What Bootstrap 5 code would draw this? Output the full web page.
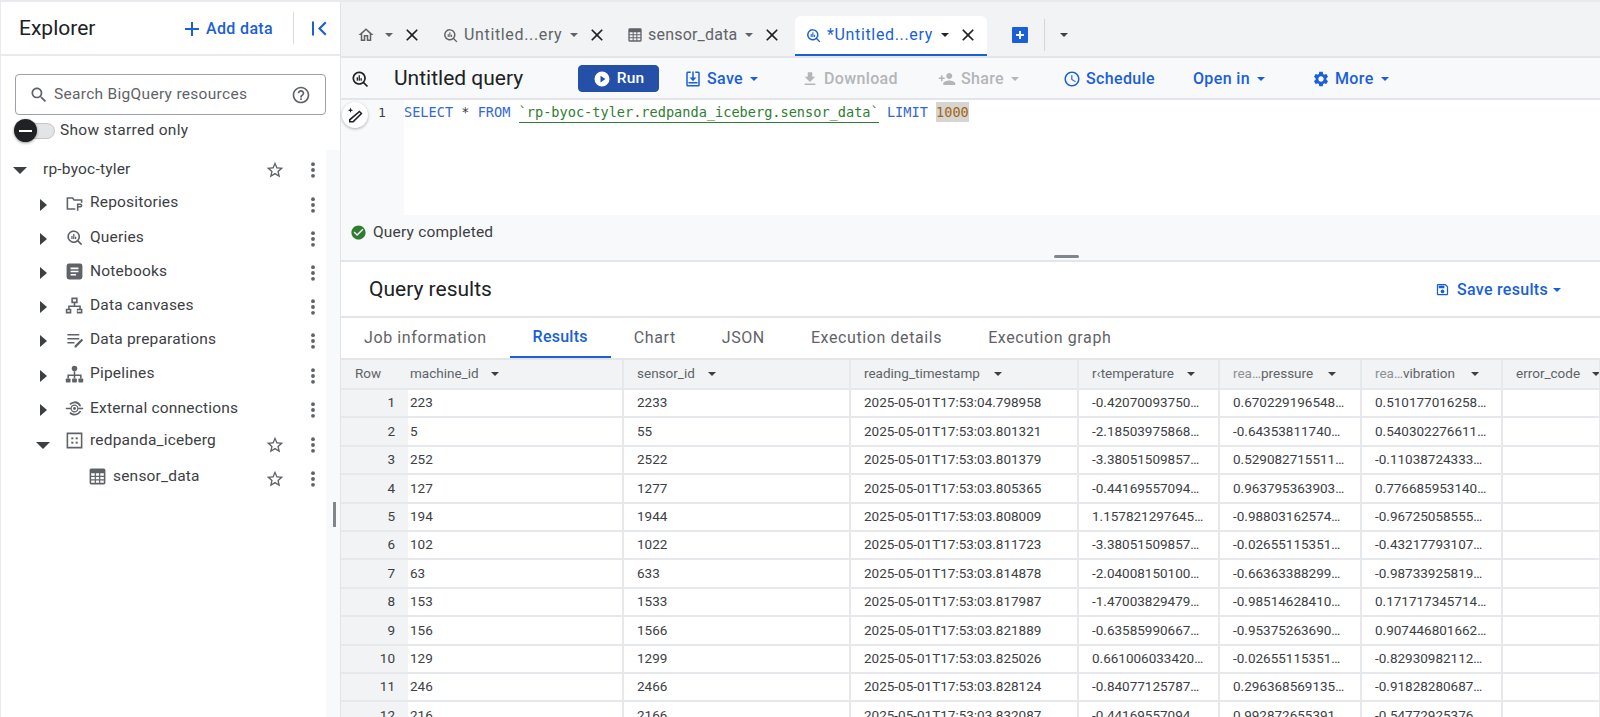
<!DOCTYPE html>
<html lang="en"><head><meta charset="utf-8"><title>BigQuery</title>
<link href="https://cdn.jsdelivr.net/npm/bootstrap@5.3.0/dist/css/bootstrap.min.css" rel="stylesheet">
<style>
html,body{height:717px;overflow:hidden}
body{font-family:Roboto,"Liberation Sans",sans-serif;font-size:15.5px;letter-spacing:.2px;color:#3c4043;background:#fff;border-top:2px solid #e8eaed;border-left:1px solid #e8eaed}
svg{display:block;flex:none;fill:currentColor}
.shell{height:715px}
.side{width:339px;flex:none;position:relative}
.side-head{height:54px;padding-left:18px;border-bottom:2px solid #e8eaed}
.side-title{font-size:21px;letter-spacing:0;color:#202124;width:165px;padding-top:1px}
.blue{color:#1a5fd8}
.add{font-weight:500;font-size:16px;letter-spacing:.35px;gap:6px;width:109px;padding-top:1px}
.vr-line{width:1px;height:32px;background:#dadce0;margin-right:17px}
.searchbox{margin:18px 14px 0;height:41px;border:1px solid #9aa0a6;border-radius:4px;padding:0 14px 0 13px;color:#5f6368}
.searchbox span{margin-left:5px;flex:1;letter-spacing:.3px}
.toggle-line{height:26px;margin:3px 0 0 6px;color:#3c4043;letter-spacing:.3px}
.track{width:38px;height:16px;border-radius:8px;background:#e3e4e6;border:1px solid #c4c7ca;position:relative;margin-left:10px;margin-right:5px}
.thumb{position:absolute;left:-4px;top:-5px;width:23px;height:23px;border-radius:50%;background:#202124;box-shadow:0 1px 3px rgba(0,0,0,.4);display:flex;align-items:center;justify-content:center}
.thumb i{display:block;width:13px;height:2px;background:#fff}
.tree{margin-top:10px;width:325px}
.node{height:34.2px}
.node.first{height:32px}
.car-r{width:0;height:0;border-left:7px solid #3c4043;border-top:6px solid transparent;border-bottom:6px solid transparent;margin-left:39px;margin-right:18px;margin-top:3px}
.car-d{width:0;height:0;border-top:7px solid #3c4043;border-left:7px solid transparent;border-right:7px solid transparent;margin-left:12px;margin-right:16px}
.car-d.deep{margin-left:35px;margin-right:15px;margin-top:6px}
.ic{color:#5f6368;margin-right:6px}
.grow{flex:1}
.star{color:#5f6368;margin-right:18px}
.kebab{color:#5f6368;margin-right:3px;margin-top:3px}
.first .kebab{margin-top:0}
.deep-leaf{padding-left:87px}
.lower .star,.lower .kebab{margin-top:5px}
.raised{margin-top:-4px}
.rail{position:absolute;right:0;top:148px;bottom:0;width:14px;background:#f8f9fb}
.grip{position:absolute;right:4px;top:500px;width:3px;height:25px;background:#80868b}
.workspace{min-width:0;border-left:1px solid #e0e3e7}
.tabstrip{height:56px;background:#f1f3f4;align-items:flex-end;border-bottom:2px solid #e3e5e8;color:#5f6368;font-size:16px}
.tabit{height:40px;padding-bottom:2px;white-space:nowrap}
.tabit.on{background:#fff;color:#1a5fd8;border-bottom:2px solid #1a5fd8;border-radius:6px 6px 0 0;padding-bottom:0}
.t-home{padding-left:16px;width:90px}
.t-q{width:186px;padding-left:11px}
.t-s{width:178px;padding-left:10px}
.t-a{width:192px;padding-left:10px}
.tabit .lbl{margin:0 8px 0 5px}
.lbl.dots{letter-spacing:.65px}
.caret-sm{width:0;height:0;border-top:4px solid currentColor;border-left:4px solid transparent;border-right:4px solid transparent}
.x{color:#202124;margin-left:9px}
.t-home .caret-sm{margin-left:10px}
.t-add{margin-left:16px;width:41px;padding-left:9px}
.t-div{width:1px;height:32px;background:#d5d7da;margin-bottom:5px}
.t-more{margin-left:15px;color:#3c4043}
.tbar{height:42px;background:#f8f9fa;border-bottom:2px solid #e3e5e8;font-weight:500;font-size:16px;padding-top:1px}
.tbar-title{font-size:21px;font-weight:400;letter-spacing:0;color:#202124;width:184px;margin-left:24px}
.qmark{margin-left:9px;color:#202124}
.run.btn{--bs-btn-bg:#2450a8;--bs-btn-color:#fff;--bs-btn-border-color:#2450a8;--bs-btn-padding-y:0;--bs-btn-padding-x:0;--bs-btn-font-size:15.5px;--bs-btn-font-weight:500;--bs-btn-border-radius:4px;width:81px;height:27px;gap:6px;letter-spacing:.2px}
.tool{gap:5px;white-space:nowrap;letter-spacing:.35px}
.tool .caret-sm{margin-left:2px}
.off{color:#b3b5b8}
.tl-save{margin-left:25px;width:117px}
.tl-dl{width:137px}
.tl-sh{width:125px}
.tl-sc{width:130px}
.tl-op{width:119px}
.editor{height:115px;background:#fff}
.gutter{width:63px;background:#f8f9fa;position:relative;flex:none}
.gutter b{font-family:"DejaVu Sans Mono",monospace;font-weight:400;font-size:13px;position:absolute;left:37px;top:3px;color:#3c4043}
.pen{position:absolute;left:1px;top:2px;width:26px;height:26px;border-radius:50%;background:#fff;box-shadow:0 1px 3px rgba(0,0,0,.3);display:flex;align-items:center;justify-content:center;color:#202124}
.sql{font-family:"DejaVu Sans Mono",monospace;font-size:13.6px;letter-spacing:0;line-height:20px;padding-top:2px;margin:0;color:#3c4043;white-space:pre;overflow:visible}
.kw{color:#3367d6}
.str{color:#2e7d32;border-bottom:1px solid #2e7d32;padding-bottom:2px}
.num{color:#a5660f;background:#d5d5d3;padding:2px 0}
.status{height:47px;background:#f8f9fa;border-bottom:2px solid #e3e5e8;position:relative;padding-left:9px;padding-bottom:10px;color:#3c4043}
.status svg{color:#2e7d32;margin-right:6px}
.handle{position:absolute;left:713px;bottom:2px;width:25px;height:3px;border-radius:2px;background:#80868b}
.reshead{height:56px;padding:1px 39px 0 28px;border-bottom:2px solid #e3e5e8}
.reshead h2{font-size:21px;font-weight:400;letter-spacing:0;color:#202124;margin:0}
.saver{gap:7px;font-weight:500;font-size:16px;letter-spacing:.3px}
.saver .caret-sm{margin-left:-2px}
.subtabs{height:42px;color:#5f6368;border-bottom:2px solid #e3e5e8;font-size:16px;letter-spacing:.6px}
.subtabs a{display:flex;align-items:center;height:40px;padding:0 23px;color:inherit;text-decoration:none;white-space:nowrap}
.subtabs a.on{color:#1a5fd8;font-weight:500;letter-spacing:.25px;border-bottom:2px solid #1a5fd8}
.grid-wrap{overflow:hidden;flex:1;min-height:0}
.tbl.table{table-layout:fixed;width:1259px;margin:0;font-size:13.5px;letter-spacing:0;--bs-table-color:#3c4043;--bs-table-border-color:#e6e8ec}
.tbl col:nth-child(1){width:67px}.tbl col:nth-child(2){width:215px}.tbl col:nth-child(3){width:227px}.tbl col:nth-child(4){width:228px}
.tbl col:nth-child(5){width:141px}.tbl col:nth-child(6){width:142px}.tbl col:nth-child(7){width:141px}.tbl col:nth-child(8){width:98px}
.tbl th,.tbl td{height:28.4px;padding:0 0 0 13px;vertical-align:middle;border-width:0 2px 2px 0;border-style:solid;white-space:nowrap;overflow:hidden;background:#fff;line-height:1}
.tbl th{height:29px;background:#f1f3f4;color:#5f6368;font-weight:400}
.tbl th.rn{padding-left:14px;border-right:0;border-bottom-color:#e6e8ec}
.tbl td.rn{background:#f1f3f4;color:#3c4043;text-align:right;padding:0 13px 0 0;border-right:0;border-bottom-color:#e6e8ec}
.tbl .tight{padding-left:2px}
.hcell{display:flex;align-items:center;justify-content:space-between}
.hcell .caret-sm{border-top-color:#3c4043;margin-right:0}
.w1{width:89px}.w2{width:79px}.w3{width:138px}.w4{width:103px}.w5{width:103px}.w6{width:104px}.w7{width:84px}
.hint{color:#8d9196}
</style></head><body>
<svg width="0" height="0" class="position-absolute"><defs>
<symbol id="i-q" viewBox="0 0 24 24"><path d="M11 3a8 8 0 1 0 4.900 14.300l4.400 4.400 1.400-1.400-4.400-4.400A8 8 0 0 0 11 3zm0 2a6 6 0 1 1 0 12 6 6 0 0 1 0-12z"/><rect x="8" y="10" width="1.600" height="4"/><rect x="10.300" y="7.500" width="1.600" height="6.500"/><rect x="12.600" y="11" width="1.600" height="3"/></symbol>
<symbol id="i-x" viewBox="0 0 24 24"><path d="M19 6.410L17.590 5 12 10.590 6.410 5 5 6.410 10.590 12 5 17.590 6.410 19 12 13.410 17.590 19 19 17.590 13.410 12z"/></symbol>
<symbol id="i-star" viewBox="0 0 24 24"><path d="M22 9.240l-7.190-.62L12 2 9.190 8.630 2 9.240l5.460 4.730L5.820 21 12 17.270 18.180 21l-1.630-7.030L22 9.240zM12 15.400l-3.760 2.270 1-4.280-3.320-2.880 4.380-.38L12 6.100l1.710 4.040 4.380.38-3.320 2.880 1 4.280L12 15.400z"/></symbol>
<symbol id="i-more" viewBox="0 0 24 24"><circle cx="12" cy="5" r="2.300"/><circle cx="12" cy="12" r="2.300"/><circle cx="12" cy="19" r="2.300"/></symbol>
<symbol id="i-table" viewBox="0 0 24 24"><path fill-rule="evenodd" d="M4 2h16a2 2 0 0 1 2 2v16a2 2 0 0 1-2 2H4a2 2 0 0 1-2-2V4a2 2 0 0 1 2-2zm0 6v3h4.500V8zm6 0v3h4V8zm5.500 0v3H20V8zM4 12.500v3h4.500v-3zm6 0v3h4v-3zm5.500 0v3H20v-3zM4 17v3h4.500v-3zm6 0v3h4v-3zm5.500 0v3H20v-3z"/></symbol>
</defs></svg>
<div class="d-flex shell">
<aside class="side">
  <div class="side-head d-flex align-items-center">
    <div class="side-title">Explorer</div>
    <div class="add blue d-flex align-items-center"><svg width="16" height="16" viewBox="0 0 16 16"><path d="M7 1h2v6h6v2H9v6H7V9H1V7h6z"/></svg>Add data</div>
    <div class="vr-line"></div>
    <svg class="blue" width="17" height="17" viewBox="0 0 17 17"><rect x="1" y="1.500" width="2" height="14"/><path d="M14 1.500l1.500 1.500-5.500 5.500 5.500 5.500L14 15.500l-7-7z"/></svg>
  </div>
  <div class="searchbox d-flex align-items-center">
    <svg width="20" height="20" viewBox="0 0 24 24"><path d="M15.500 14h-.79l-.28-.27C15.410 12.590 16 11.110 16 9.500 16 5.910 13.090 3 9.500 3S3 5.910 3 9.500 5.910 16 9.500 16c1.610 0 3.090-.59 4.230-1.570l.27.28v.79l5 4.990L20.490 19l-4.990-5zm-6 0C7.010 14 5 11.990 5 9.500S7.010 5 9.500 5 14 7.010 14 9.500 11.990 14 9.500 14z"/></svg>
    <span class="hint-text">Search BigQuery resources</span>
    <svg width="20" height="20" viewBox="0 0 24 24"><path d="M11 18h2v-2h-2v2zm1-16C6.480 2 2 6.480 2 12s4.480 10 10 10 10-4.480 10-10S17.520 2 12 2zm0 18c-4.410 0-8-3.590-8-8s3.590-8 8-8 8 3.590 8 8-3.590 8-8 8zm0-14c-2.210 0-4 1.790-4 4h2c0-1.100.9-2 2-2s2 .9 2 2c0 2-3 1.750-3 5h2c0-2.250 3-2.500 3-5 0-2.210-1.790-4-4-4z"/></svg>
  </div>
  <div class="toggle-line d-flex align-items-center"><div class="track"><div class="thumb"><i></i></div></div>Show starred only</div>
  <div class="tree">
    <div class="node first d-flex align-items-center"><div class="car-d"></div><span class="grow">rp-byoc-tyler</span><svg class="star" width="20" height="20"><use href="#i-star"/></svg><svg class="kebab" width="20" height="20"><use href="#i-more"/></svg></div>
    <div class="node d-flex align-items-center"><div class="car-r"></div><svg class="ic" width="19" height="19" viewBox="0 0 24 24"><path d="M2 4h8l2 2.500h10V11h-2V8.500H11L9 6H4v12h9v2H2zM15 12h4.500a2.500 2.500 0 0 1 0 5H17v4h-2zm2 2v1h2.500a.5.500 0 0 0 0-1z"/></svg><span class="grow">Repositories</span><svg class="kebab" width="20" height="20"><use href="#i-more"/></svg></div>
    <div class="node d-flex align-items-center"><div class="car-r"></div><svg class="ic" width="19" height="19"><use href="#i-q"/></svg><span class="grow">Queries</span><svg class="kebab" width="20" height="20"><use href="#i-more"/></svg></div>
    <div class="node d-flex align-items-center"><div class="car-r"></div><svg class="ic" width="19" height="19" viewBox="0 0 24 24"><path fill-rule="evenodd" d="M5 2h14a3 3 0 0 1 3 3v14a3 3 0 0 1-3 3H5a3 3 0 0 1-3-3V5a3 3 0 0 1 3-3zm2 5v2h10V7zm0 4v2h10v-2zm0 4v2h7v-2z"/></svg><span class="grow">Notebooks</span><svg class="kebab" width="20" height="20"><use href="#i-more"/></svg></div>
    <div class="node d-flex align-items-center"><div class="car-r"></div><svg class="ic" width="19" height="19" viewBox="0 0 24 24"><path fill-rule="evenodd" d="M8 2h8v7h-3v3h7v4h2v6h-7v-6h3v-2H6v2h2v6H1v-6h3v-4h7V9H8zm2 2v3h4V4zM3 18v2h3v-2zm13 0v2h4v-2z"/></svg><span class="grow">Data canvases</span><svg class="kebab" width="20" height="20"><use href="#i-more"/></svg></div>
    <div class="node d-flex align-items-center"><div class="car-r"></div><svg class="ic" width="19" height="19" viewBox="0 0 24 24"><path d="M3 5h15v2H3zM3 10h15v2H3zM3 15h9v2H3zM21 11l2 2-9 9h-2v-2z"/></svg><span class="grow">Data preparations</span><svg class="kebab" width="20" height="20"><use href="#i-more"/></svg></div>
    <div class="node d-flex align-items-center"><div class="car-r"></div><svg class="ic" width="19" height="19" viewBox="0 0 24 24"><circle cx="12" cy="4.500" r="3.500"/><path d="M11 8h2v4h8v5h-2v-3h-6v3h-2v-3H5v3H3v-5h8z"/><rect x="1" y="17" width="6" height="5" rx="1"/><rect x="9" y="17" width="6" height="5" rx="1"/><rect x="17" y="17" width="6" height="5" rx="1"/></svg><span class="grow">Pipelines</span><svg class="kebab" width="20" height="20"><use href="#i-more"/></svg></div>
    <div class="node d-flex align-items-center"><div class="car-r"></div><svg class="ic" width="19" height="19" viewBox="0 0 24 24"><path d="M1 11h6.100a5 5 0 1 1 0 2H1zm11-2.500a3.500 3.500 0 1 0 0 7 3.500 3.500 0 0 0 0-7zM17 11h6v2h-6zM12 3a9 9 0 0 1 8.500 6h-2.200A7 7 0 0 0 7 7.500L5.500 6A9 9 0 0 1 12 3zM7 16.500A7 7 0 0 0 18.300 15h2.200a9 9 0 0 1-15 3z"/><circle cx="12" cy="12" r="1.800"/></svg><span class="grow">External connections</span><svg class="kebab" width="20" height="20"><use href="#i-more"/></svg></div>
    <div class="node d-flex align-items-center lower"><div class="car-d deep"></div><svg class="ic raised" width="19" height="19" viewBox="0 0 24 24"><path fill-rule="evenodd" d="M2 2h20v20H2zm2 2v16h16V4z"/><rect x="8" y="8" width="2.500" height="2.500"/><rect x="13.500" y="8" width="2.500" height="2.500"/><rect x="8" y="13.500" width="2.500" height="2.500"/><rect x="13.500" y="13.500" width="2.500" height="2.500"/></svg><span class="grow raised">redpanda_iceberg</span><svg class="star" width="20" height="20"><use href="#i-star"/></svg><svg class="kebab" width="20" height="20"><use href="#i-more"/></svg></div>
    <div class="node d-flex align-items-center deep-leaf lower"><svg class="ic" width="19" height="19"><use href="#i-table"/></svg><span class="grow">sensor_data</span><svg class="star" width="20" height="20"><use href="#i-star"/></svg><svg class="kebab" width="20" height="20"><use href="#i-more"/></svg></div>
  </div>
  <div class="rail"></div><div class="grip"></div>
</aside>
<main class="workspace flex-grow-1 d-flex flex-column">
  <div class="tabstrip d-flex">
    <div class="tabit t-home d-flex align-items-center"><svg width="18" height="18" viewBox="0 0 24 24"><path d="M12 5.690l5 4.500V18h-2v-6H9v6H7v-7.810l5-4.500M12 3L2 12h3v8h6v-6h2v6h6v-8h3L12 3z"/></svg><div class="caret-sm"></div><svg class="x" width="20" height="20"><use href="#i-x"/></svg></div>
    <div class="tabit t-q d-flex align-items-center"><svg width="17" height="17"><use href="#i-q"/></svg><span class="lbl dots">Untitled...ery</span><div class="caret-sm"></div><svg class="x" width="20" height="20"><use href="#i-x"/></svg></div>
    <div class="tabit t-s d-flex align-items-center"><svg width="16" height="16"><use href="#i-table"/></svg><span class="lbl">sensor_data</span><div class="caret-sm"></div><svg class="x" width="20" height="20"><use href="#i-x"/></svg></div>
    <div class="tabit on t-a d-flex align-items-center"><svg width="17" height="17"><use href="#i-q"/></svg><span class="lbl dots">*Untitled...ery</span><div class="caret-sm text-dark"></div><svg class="x" width="20" height="20"><use href="#i-x"/></svg></div>
    <div class="tabit t-add d-flex align-items-center"><svg class="blue" width="16" height="16" viewBox="0 0 16 16"><path fill-rule="evenodd" d="M1 0h14a1 1 0 0 1 1 1v14a1 1 0 0 1-1 1H1a1 1 0 0 1-1-1V1a1 1 0 0 1 1-1zm6 4v3H4v2h3v3h2V9h3V7H9V4z"/></svg></div>
    <div class="t-div"></div>
    <div class="tabit t-more d-flex align-items-center"><div class="caret-sm"></div></div>
  </div>
  <div class="tbar d-flex align-items-center">
    <svg class="qmark" width="20" height="20"><use href="#i-q"/></svg>
    <div class="tbar-title">Untitled query</div>
    <button class="btn run d-flex align-items-center justify-content-center" type="button"><svg width="18" height="18" viewBox="0 0 24 24"><path fill-rule="evenodd" d="M12 2a10 10 0 1 1 0 20 10 10 0 0 1 0-20zM10 7.500v9l6.500-4.500z"/></svg>Run</button>
    <div class="tool tl-save blue d-flex align-items-center"><svg width="18" height="18" viewBox="0 0 24 24"><path fill-rule="evenodd" d="M5 2h4v2H5v16h14V4h-4V2h4a2 2 0 0 1 2 2v16a2 2 0 0 1-2 2H5a2 2 0 0 1-2-2V4a2 2 0 0 1 2-2z"/><path d="M11 2h2v8h3.500L12 15l-4.500-5H11zM6 16h12v2H6z"/></svg>Save<div class="caret-sm"></div></div>
    <div class="tool tl-dl off d-flex align-items-center"><svg width="18" height="18" viewBox="0 0 24 24"><path d="M19 9h-4V3H9v6H5l7 7 7-7zM5 18v2h14v-2H5z"/></svg>Download</div>
    <div class="tool tl-sh off d-flex align-items-center"><svg width="18" height="18" viewBox="0 0 24 24"><path d="M15 12c2.210 0 4-1.790 4-4s-1.790-4-4-4-4 1.790-4 4 1.790 4 4 4zm-9-2V7H4v3H1v2h3v3h2v-3h3v-2H6zm9 4c-2.670 0-8 1.340-8 4v2h16v-2c0-2.660-5.330-4-8-4z"/></svg>Share<div class="caret-sm"></div></div>
    <div class="tool tl-sc blue d-flex align-items-center"><svg width="18" height="18" viewBox="0 0 24 24"><path d="M11.990 2C6.470 2 2 6.480 2 12s4.470 10 9.990 10C17.520 22 22 17.520 22 12S17.520 2 11.990 2zM12 20c-4.420 0-8-3.580-8-8s3.580-8 8-8 8 3.580 8 8-3.580 8-8 8zm.5-13H11v6l5.250 3.150.75-1.230-4.500-2.670z"/></svg>Schedule</div>
    <div class="tool tl-op blue d-flex align-items-center">Open in<div class="caret-sm"></div></div>
    <div class="tool blue d-flex align-items-center"><svg width="18" height="18" viewBox="0 0 24 24"><path d="M19.140 12.940c.04-.3.06-.61.06-.94 0-.32-.02-.64-.07-.94l2.030-1.580c.18-.14.23-.41.12-.61l-1.920-3.320c-.12-.22-.37-.29-.59-.22l-2.390.96c-.5-.38-1.030-.7-1.620-.94l-.36-2.540c-.04-.24-.24-.41-.48-.41h-3.840c-.24 0-.43.17-.47.41l-.36 2.540c-.59.24-1.130.57-1.620.94l-2.390-.96c-.22-.08-.47 0-.59.22L2.740 8.870c-.12.21-.08.47.12.61l2.030 1.580c-.05.3-.09.63-.09.94s.02.64.07.94l-2.030 1.580c-.18.14-.23.41-.12.61l1.920 3.320c.12.22.37.29.59.22l2.390-.96c.5.38 1.030.7 1.620.94l.36 2.540c.05.24.24.41.48.41h3.840c.24 0 .44-.17.47-.41l.36-2.540c.59-.24 1.130-.56 1.620-.94l2.390.96c.22.08.47 0 .59-.22l1.920-3.320c.12-.22.07-.47-.12-.61l-2.010-1.580zM12 15.600c-1.980 0-3.600-1.620-3.600-3.600s1.620-3.600 3.600-3.600 3.600 1.620 3.600 3.600-1.620 3.600-3.600 3.600z"/></svg>More<div class="caret-sm"></div></div>
  </div>
  <div class="editor d-flex">
    <div class="gutter"><div class="pen"><svg width="18" height="18" viewBox="0 0 24 24"><path fill-rule="evenodd" d="M18 6l4 4L10 22H4v-4.500zm0 2.800L6 19v1h3L19.200 10zM6 2l1 2.500L9.500 5.500 7 6.500 6 9 5 6.500 2.500 5.500 5 4.500z"/></svg></div><b>1</b></div>
    <pre class="sql"><span class="kw">SELECT</span> * <span class="kw">FROM</span> <span class="str">`rp-byoc-tyler.redpanda_iceberg.sensor_data`</span> <span class="kw">LIMIT</span> <span class="num">1000</span></pre>
  </div>
  <div class="status d-flex align-items-center"><svg width="17" height="17" viewBox="0 0 24 24"><path d="M12 2C6.480 2 2 6.480 2 12s4.480 10 10 10 10-4.480 10-10S17.520 2 12 2zm-2 15l-5-5 1.410-1.410L10 14.170l7.590-7.590L19 8l-9 9z"/></svg>Query completed<div class="handle"></div></div>
  <div class="reshead d-flex align-items-center justify-content-between"><h2>Query results</h2>
    <div class="saver blue d-flex align-items-center"><svg width="15" height="15" viewBox="0 0 24 24"><path d="M17 3H5c-1.110 0-2 .9-2 2v14c0 1.100.89 2 2 2h14c1.100 0 2-.9 2-2V7l-4-4zm2 16H5V5h11.170L19 7.830V19zm-7-7c-1.660 0-3 1.340-3 3s1.340 3 3 3 3-1.340 3-3-1.340-3-3-3zM6 6h9v4H6z"/></svg>Save results<div class="caret-sm"></div></div>
  </div>
  <div class="subtabs d-flex"><a href="#">Job information</a><a href="#" class="on">Results</a><a href="#">Chart</a><a href="#">JSON</a><a href="#">Execution details</a><a href="#">Execution graph</a></div>
  <div class="grid-wrap">
  <table class="table tbl"><colgroup><col><col><col><col><col><col><col><col></colgroup>
  <thead><tr>
    <th class="rn">Row</th>
    <th class="tight"><div class="hcell w1">machine_id<div class="caret-sm"></div></div></th>
    <th><div class="hcell w2">sensor_id<div class="caret-sm"></div></div></th>
    <th><div class="hcell w3">reading_timestamp<div class="caret-sm"></div></div></th>
    <th><div class="hcell w4">r‹temperature<div class="caret-sm"></div></div></th>
    <th><div class="hcell w5"><span><span class="hint">rea…</span>pressure</span><div class="caret-sm"></div></div></th>
    <th><div class="hcell w6"><span><span class="hint">rea…</span>vibration</span><div class="caret-sm"></div></div></th>
    <th><div class="hcell w7">error_code<div class="caret-sm"></div></div></th>
  </tr></thead>
  <tbody>
  <tr><td class="rn">1</td><td class="tight">223</td><td>2233</td><td>2025-05-01T17:53:04.798958</td><td>-0.42070093750…</td><td>0.670229196548…</td><td>0.510177016258…</td><td></td></tr>
  <tr><td class="rn">2</td><td class="tight">5</td><td>55</td><td>2025-05-01T17:53:03.801321</td><td>-2.18503975868…</td><td>-0.64353811740…</td><td>0.540302276611…</td><td></td></tr>
  <tr><td class="rn">3</td><td class="tight">252</td><td>2522</td><td>2025-05-01T17:53:03.801379</td><td>-3.38051509857…</td><td>0.529082715511…</td><td>-0.11038724333…</td><td></td></tr>
  <tr><td class="rn">4</td><td class="tight">127</td><td>1277</td><td>2025-05-01T17:53:03.805365</td><td>-0.44169557094…</td><td>0.963795363903…</td><td>0.776685953140…</td><td></td></tr>
  <tr><td class="rn">5</td><td class="tight">194</td><td>1944</td><td>2025-05-01T17:53:03.808009</td><td>1.157821297645…</td><td>-0.98803162574…</td><td>-0.96725058555…</td><td></td></tr>
  <tr><td class="rn">6</td><td class="tight">102</td><td>1022</td><td>2025-05-01T17:53:03.811723</td><td>-3.38051509857…</td><td>-0.02655115351…</td><td>-0.43217793107…</td><td></td></tr>
  <tr><td class="rn">7</td><td class="tight">63</td><td>633</td><td>2025-05-01T17:53:03.814878</td><td>-2.04008150100…</td><td>-0.66363388299…</td><td>-0.98733925819…</td><td></td></tr>
  <tr><td class="rn">8</td><td class="tight">153</td><td>1533</td><td>2025-05-01T17:53:03.817987</td><td>-1.47003829479…</td><td>-0.98514628410…</td><td>0.171717345714…</td><td></td></tr>
  <tr><td class="rn">9</td><td class="tight">156</td><td>1566</td><td>2025-05-01T17:53:03.821889</td><td>-0.63585990667…</td><td>-0.95375263690…</td><td>0.907446801662…</td><td></td></tr>
  <tr><td class="rn">10</td><td class="tight">129</td><td>1299</td><td>2025-05-01T17:53:03.825026</td><td>0.661006033420…</td><td>-0.02655115351…</td><td>-0.82930982112…</td><td></td></tr>
  <tr><td class="rn">11</td><td class="tight">246</td><td>2466</td><td>2025-05-01T17:53:03.828124</td><td>-0.84077125787…</td><td>0.296368569135…</td><td>-0.91828280687…</td><td></td></tr>
  <tr><td class="rn">12</td><td class="tight">216</td><td>2166</td><td>2025-05-01T17:53:03.832087</td><td>-0.44169557094…</td><td>0.992872655391…</td><td>-0.54772925376…</td><td></td></tr>
  </tbody></table>
  </div>
</main>
</div>
</body></html>
